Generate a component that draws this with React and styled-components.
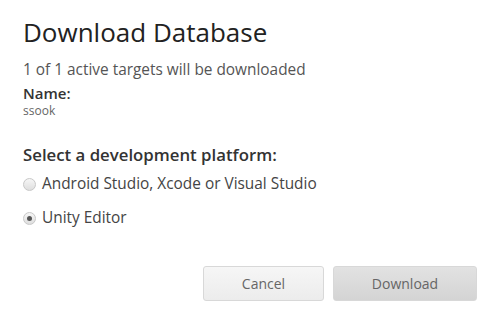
import React, { useState } from "react";
import styled, { createGlobalStyle } from "styled-components";

const GlobalStyle = createGlobalStyle`
  html, body {
    margin: 0;
    padding: 0;
    background: #fff;
  }
  body {
    font-family: "Open Sans", "Liberation Sans", sans-serif;
  }
`;

const Dialog = styled.div`
  width: 504px;
  height: 325px;
  box-sizing: border-box;
  padding: 16px 27px 0 23px;
  display: flex;
  flex-direction: column;
`;

const Title = styled.h1`
  margin: 0;
  font-size: 26px;
  line-height: 32px;
  font-weight: 400;
  color: #222;
`;

const Subtitle = styled.p`
  margin: 12px 0 0;
  font-size: 15.4px;
  line-height: 20px;
  color: #555;
`;

const Label = styled.div`
  margin-top: ${props => props.$top || 0}px;
  font-size: ${props => props.$size || 15}px;
  line-height: ${props => props.$lh || 20}px;
  font-weight: 600;
  color: #333;
`;

const Value = styled.div`
  margin-top: 1px;
  font-size: 12px;
  line-height: 16px;
  color: #666;
`;

const Options = styled.div`
  display: flex;
  flex-direction: column;
  gap: 14px;
  margin-top: 9px;
`;

const Option = styled.label`
  display: flex;
  align-items: center;
  gap: 6px;
  font-size: 15.4px;
  line-height: 20px;
  color: #444;
  cursor: pointer;
`;

const Radio = styled.span`
  width: 13px;
  height: 13px;
  box-sizing: border-box;
  border-radius: 50%;
  border: 1px solid #c8c8c8;
  background: linear-gradient(#f6f6f6, #dedede);
  display: flex;
  align-items: center;
  justify-content: center;

  &::after {
    content: "";
    width: 5px;
    height: 5px;
    border-radius: 50%;
    background: #555;
    display: ${props => (props.$checked ? "block" : "none")};
  }
`;

const Actions = styled.div`
  display: flex;
  justify-content: flex-end;
  gap: 9px;
  margin-top: 38px;
`;

const Button = styled.button`
  width: ${props => props.$width}px;
  height: 35px;
  box-sizing: border-box;
  border: 1px solid #d8d8d8;
  border-radius: 3px;
  background: ${props =>
    props.$dim
      ? "linear-gradient(#e2e2e2, #d4d4d4)"
      : "linear-gradient(#f6f6f6, #ececec)"};
  font-family: inherit;
  font-size: 14px;
  color: #666;
  cursor: pointer;
`;

const options = [
  { id: "native", label: "Android Studio, Xcode or Visual Studio" },
  { id: "unity", label: "Unity Editor" },
];

const App = () => {
  const [platform, setPlatform] = useState("unity");

  return (
    <Dialog>
      <GlobalStyle />
      <Title>Download Database</Title>
      <Subtitle>1 of 1 active targets will be downloaded</Subtitle>
      <Label $top={4} $lh={18}>
        Name:
      </Label>
      <Value>ssook</Value>
      <Label $top={26} $size={16.8}>
        Select a development platform:
      </Label>
      <Options>
        {options.map(o => (
          <Option key={o.id} onClick={() => setPlatform(o.id)}>
            <Radio $checked={platform === o.id} />
            {o.label}
          </Option>
        ))}
      </Options>
      <Actions>
        <Button $width={121}>Cancel</Button>
        <Button $width={144} $dim>
          Download
        </Button>
      </Actions>
    </Dialog>
  );
};

export default App;
